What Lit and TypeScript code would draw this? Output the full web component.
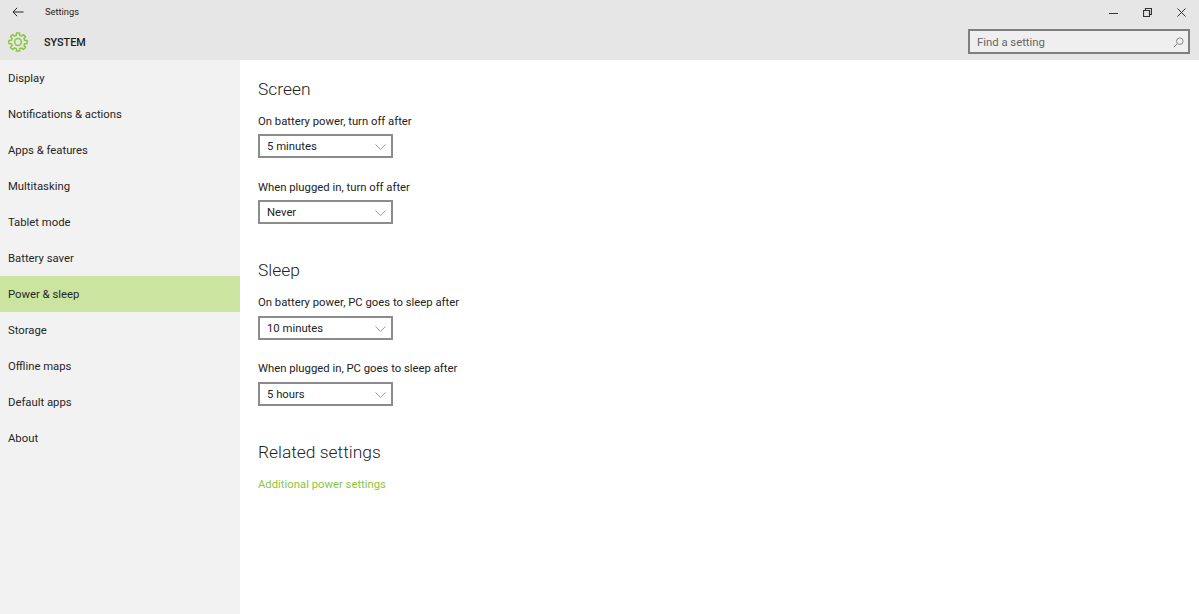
import { LitElement, css, html } from 'lit';
import { customElement, property } from 'lit/decorators.js';

const NAV = [
  'Display',
  'Notifications & actions',
  'Apps & features',
  'Multitasking',
  'Tablet mode',
  'Battery saver',
  'Power & sleep',
  'Storage',
  'Offline maps',
  'Default apps',
  'About',
];

const gearPath = () => {
  // cog outline with 8 teeth, built from polar points
  const pts: string[] = [];
  const teeth = 8;
  for (let i = 0; i < teeth; i++) {
    const a = (i / teeth) * Math.PI * 2 - Math.PI / 2;
    const step = Math.PI / teeth;
    const p = (r: number, t: number) =>
      `${(10 + r * Math.cos(t)).toFixed(2)} ${(10 + r * Math.sin(t)).toFixed(2)}`;
    pts.push(p(9.2, a - step * 0.42), p(9.2, a + step * 0.42), p(6.9, a + step * 0.62), p(6.9, a + step * 1.38));
  }
  return `M${pts.join('L')}Z`;
};

@customElement('setting-select')
export class SettingSelect extends LitElement {
  @property({ type: String })
  value = '';

  static styles = css`
    :host {
      display: block;
    }
    .box {
      box-sizing: border-box;
      width: 135px;
      height: 24px;
      border: 2px solid #8c8c8c;
      background: #fff;
      display: flex;
      align-items: center;
      justify-content: space-between;
      padding: 1px 5px 0 7px;
      font-size: 11.3px;
      color: #222;
    }
    svg {
      display: block;
    }
  `;

  render() {
    return html`<div class="box">
      <span>${this.value}</span>
      <svg width="11" height="6" viewBox="0 0 11 6" fill="none" stroke="#9a9a9a" stroke-width="1">
        <path d="M.5.5l5 5 5-5" />
      </svg>
    </div>`;
  }
}

@customElement('app-root')
export class AppRoot extends LitElement {
  static styles = css`
    :host {
      display: block;
      width: 1199px;
      height: 614px;
      overflow: hidden;
      background: #fff;
      font-family: Roboto, 'Open Sans', sans-serif;
      color: #222;
      font-size: 11.3px;
    }
    .header {
      height: 60px;
      background: #e6e6e6;
      display: flex;
      justify-content: space-between;
    }
    .header-left {
      display: flex;
      flex-direction: column;
    }
    .title-row {
      height: 24px;
      display: flex;
      align-items: center;
      padding-left: 12px;
      gap: 21px;
      font-size: 9.3px;
    }
    .system-row {
      height: 36px;
      display: flex;
      align-items: center;
      padding: 1px 0 0 8px;
      gap: 16px;
      font-size: 10.8px;
      font-weight: 500;
      color: #1a1a1a;
    }
    .header-right {
      display: flex;
      flex-direction: column;
      align-items: flex-end;
      padding-right: 9px;
    }
    .win-buttons {
      height: 29px;
      display: flex;
      align-items: center;
      gap: 25px;
      padding-right: 4px;
      padding-bottom: 5px;
      box-sizing: border-box;
    }
    .win-buttons svg,
    .title-row svg,
    .system-row svg,
    .search svg {
      display: block;
    }
    .search {
      box-sizing: border-box;
      width: 222px;
      height: 25px;
      border: 2px solid #7f7f7f;
      background: #efefef;
      display: flex;
      align-items: center;
      justify-content: space-between;
      padding: 1px 4px 0 7px;
      color: #666;
      font-size: 11.3px;
    }
    .body {
      display: flex;
      height: 554px;
    }
    nav {
      width: 240px;
      background: #f2f2f2;
    }
    .nav-item {
      box-sizing: border-box;
      height: 36px;
      display: flex;
      align-items: center;
      padding: 1px 0 0 8px;
      color: #262626;
    }
    .nav-item.active {
      background: #cbe5a0;
    }
    main {
      padding: 17px 0 0 18px;
    }
    h2 {
      margin: 0;
      font-size: 17.4px;
      font-weight: 300;
      line-height: 24px;
      color: #222;
    }
    .field-label {
      line-height: 16px;
      margin-bottom: 4px;
      color: #222;
    }
    h2 + .field {
      margin-top: 13px;
    }
    .field + .field {
      margin-top: 22px;
    }
    section + section {
      margin-top: 34px;
    }
    .sleep .field-label {
      margin-bottom: 5px;
    }
    .sleep .field + .field {
      margin-top: 21px;
    }
    .link {
      margin-top: 13px;
      color: #8cc63f;
      line-height: 16px;
    }
  `;

  render() {
    return html`
      <div class="header">
        <div class="header-left">
          <div class="title-row">
            <svg width="12" height="10" viewBox="0 0 12 10" fill="none" stroke="#222" stroke-width="1">
              <path d="M11.5 5H1M5.2.8 1 5l4.2 4.2" />
            </svg>
            <span>Settings</span>
          </div>
          <div class="system-row">
            <svg width="20" height="20" viewBox="0 0 20 20" fill="none" stroke="#8cc63f" stroke-width="1.5">
              <path d=${gearPath()} stroke-linejoin="round" />
              <circle cx="10" cy="10" r="3.4" />
            </svg>
            <span>SYSTEM</span>
          </div>
        </div>
        <div class="header-right">
          <div class="win-buttons">
            <svg width="9" height="9" viewBox="0 0 9 9" stroke="#333" fill="none"><path d="M0 5.5h9" /></svg>
            <svg width="9" height="9" viewBox="0 0 9 9" stroke="#333" fill="none">
              <path d="M.5 2.5h6v6h-6zM2.5 2.5v-2h6v6h-2" stroke-width="1.2" />
            </svg>
            <svg width="9" height="9" viewBox="0 0 9 9" stroke="#333" fill="none"><path d="M.5.5l8 8M8.5.5l-8 8" /></svg>
          </div>
          <div class="search">
            <span>Find a setting</span>
            <svg width="11" height="11" viewBox="0 0 11 11" stroke="#888" fill="none">
              <circle cx="6.8" cy="4.2" r="3.3" />
              <path d="M4.4 6.6.8 10.2" />
            </svg>
          </div>
        </div>
      </div>
      <div class="body">
        <nav>
          ${NAV.map(
            (item) => html`<div class="nav-item ${item === 'Power & sleep' ? 'active' : ''}">${item}</div>`
          )}
        </nav>
        <main>
          <section>
            <h2>Screen</h2>
            <div class="field">
              <div class="field-label">On battery power, turn off after</div>
              <setting-select value="5 minutes"></setting-select>
            </div>
            <div class="field">
              <div class="field-label">When plugged in, turn off after</div>
              <setting-select value="Never"></setting-select>
            </div>
          </section>
          <section class="sleep">
            <h2>Sleep</h2>
            <div class="field">
              <div class="field-label">On battery power, PC goes to sleep after</div>
              <setting-select value="10 minutes"></setting-select>
            </div>
            <div class="field">
              <div class="field-label">When plugged in, PC goes to sleep after</div>
              <setting-select value="5 hours"></setting-select>
            </div>
          </section>
          <section>
            <h2>Related settings</h2>
            <div class="link">Additional power settings</div>
          </section>
        </main>
      </div>
    `;
  }
}
